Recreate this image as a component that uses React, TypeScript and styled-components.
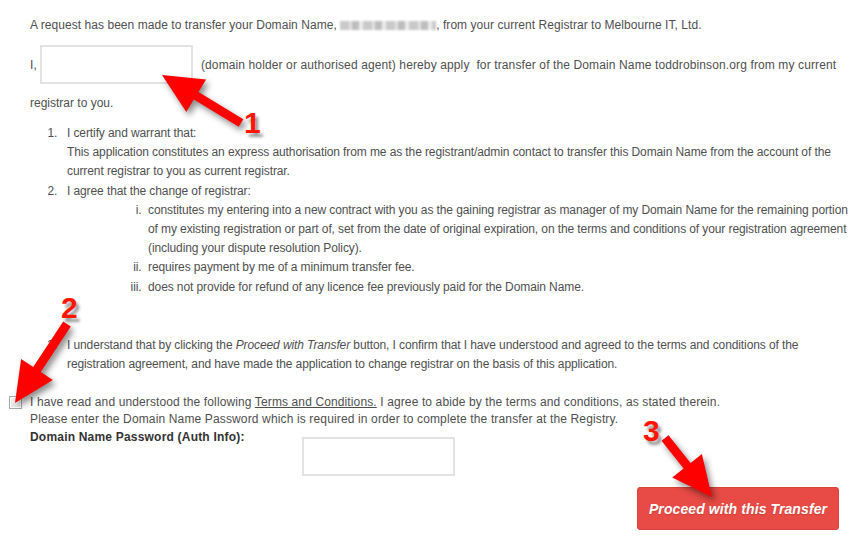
import React from "react";
import styled, { createGlobalStyle } from "styled-components";

const Global = createGlobalStyle`
  html, body { margin: 0; padding: 0; background: #fff; overflow: hidden; }
  body { font-family: "Liberation Sans", Arial, sans-serif; }
`;

const Page = styled.div`
  position: relative;
  width: 850px;
  height: 547px;
  box-sizing: border-box;
  padding: 16px 0 0 30px;
  color: #4f4f4f;
  font-size: 12px;
  overflow: hidden;
`;

const Para = styled.p<{ $ls?: number; $mt?: number; $lh?: number }>`
  margin: ${(p) => p.$mt ?? 0}px 0 0;
  line-height: ${(p) => p.$lh ?? 18}px;
  letter-spacing: ${(p) => p.$ls ?? 0}px;
  white-space: nowrap;
`;

const Blurred = styled.span`
  display: inline-block;
  width: 96px;
  height: 9px;
  vertical-align: -1px;
  background: repeating-linear-gradient(
    90deg,
    #c9c9c9 0 9px,
    #e2e2e2 9px 12px,
    #bdbdbd 12px 19px,
    #ececec 19px 23px
  );
  filter: blur(1px);
`;

const ApplyRow = styled.div`
  display: flex;
  align-items: center;
  margin-top: 11px;
  letter-spacing: 0.12px;
  white-space: nowrap;
`;

const TextBox = styled.input`
  box-sizing: border-box;
  width: 153px;
  height: 39px;
  border: 2px solid #e3e3e3;
  background: #fff;
  padding: 0 6px;
  outline: none;
  margin: 0 8px 0 3px;
`;

const Clauses = styled.ol`
  margin: 12px 0 0;
  padding-left: 37px;
  line-height: 19px;
  letter-spacing: -0.1px;
  white-space: nowrap;
  & > li::marker {
    content: counter(list-item) ".\\00a0\\00a0\\00a0";
  }
`;

const Clause = styled.li<{ $gap?: number }>`
  margin-top: ${(p) => p.$gap ?? 1}px;
`;

const SubClauses = styled.ol`
  list-style-type: lower-roman;
  margin: 0;
  padding-left: 81px;
  & > li::marker {
    content: counter(list-item, lower-roman) ".\\00a0\\00a0";
  }
`;

const AgreeRow = styled.label`
  display: flex;
  align-items: center;
  margin: 19px 0 0 -21px;
  line-height: 19px;
  letter-spacing: 0.12px;
  white-space: nowrap;
`;

const Check = styled.input.attrs({ type: "checkbox" })`
  appearance: none;
  box-sizing: border-box;
  width: 13px;
  height: 13px;
  margin: 0 8px 0 0;
  border: 1px solid #a9a9a9;
  background: linear-gradient(#f4f4f4, #e4e4e4);
  box-shadow: inset 0 0 0 1px #fff;
`;

const TermsLink = styled.a`
  color: inherit;
  text-decoration: underline;
`;

const PasswordRow = styled.div`
  display: flex;
  align-items: flex-start;
`;

const FieldLabel = styled.span`
  width: 272px;
  font-weight: bold;
  color: #333;
  line-height: 16px;
  letter-spacing: 0.2px;
  margin-top: 2px;
`;

const PasswordBox = styled(TextBox)`
  margin: 10px 0 0;
`;

const ActionRow = styled.div`
  display: flex;
  justify-content: flex-end;
  padding-right: 11px;
  margin-top: 11px;
`;

const ProceedButton = styled.button`
  width: 202px;
  height: 43px;
  box-sizing: border-box;
  border: 1px solid #d9423d;
  border-radius: 3px;
  background: #e84a45;
  color: #fff;
  font-family: "Liberation Sans", Arial, sans-serif;
  font-size: 14px;
  letter-spacing: 0.1px;
  font-weight: bold;
  font-style: italic;
  text-shadow: 0 1px 1px rgba(0, 0, 0, 0.15);
  cursor: pointer;
`;

const Overlay = styled.svg`
  position: absolute;
  left: 0;
  top: 0;
  pointer-events: none;
  filter: drop-shadow(3px 4px 3px rgba(0, 0, 0, 0.45));
`;

const Marker = styled.span<{ $x: number; $y: number }>`
  position: absolute;
  left: ${(p) => p.$x}px;
  top: ${(p) => p.$y}px;
  font-family: "Liberation Sans", Arial, sans-serif;
  font-size: 30px;
  line-height: 30px;
  font-weight: bold;
  color: #ff1500;
  text-shadow: 3px 4px 3px rgba(0, 0, 0, 0.4);
  pointer-events: none;
`;

type Pt = [number, number];

function arrowPoints(tip: Pt, tail: Pt, headLen: number, headHalf: number, shaftHalf: number) {
  const dx = tail[0] - tip[0];
  const dy = tail[1] - tip[1];
  const len = Math.hypot(dx, dy);
  const ux = dx / len;
  const uy = dy / len;
  const nx = -uy;
  const ny = ux;
  const bx = tip[0] + ux * headLen;
  const by = tip[1] + uy * headLen;
  const pts: Pt[] = [
    tip,
    [bx + nx * headHalf, by + ny * headHalf],
    [bx + nx * shaftHalf, by + ny * shaftHalf],
    [tail[0] + nx * shaftHalf, tail[1] + ny * shaftHalf],
    [tail[0] - nx * shaftHalf, tail[1] - ny * shaftHalf],
    [bx - nx * shaftHalf, by - ny * shaftHalf],
    [bx - nx * headHalf, by - ny * headHalf],
  ];
  return pts.map((p) => `${p[0].toFixed(1)},${p[1].toFixed(1)}`).join(" ");
}

const arrows: { tip: Pt; tail: Pt }[] = [
  { tip: [162, 75], tail: [241, 123] },
  { tip: [15, 403], tail: [67, 324] },
  { tip: [712, 497], tail: [665, 438] },
];

export default function App() {
  return (
    <>
      <Global />
      <Page>
        <Para $ls={0.05}>
          A request has been made to transfer your Domain Name, <Blurred />, from your current Registrar to
          Melbourne IT, Ltd.
        </Para>
        <ApplyRow>
          I,
          <TextBox aria-label="Name" />
          (domain holder or authorised agent) hereby apply&nbsp; for transfer of the Domain Name
          toddrobinson.org from my current
        </ApplyRow>
        <Para $mt={10}>registrar to you.</Para>
        <Clauses>
          <Clause $gap={0}>
            I certify and warrant that:
            <br />
            This application constitutes an express authorisation from me as the registrant/admin contact to
            transfer this Domain Name from the account of the
            <br />
            current registrar to you as current registrar.
          </Clause>
          <Clause>
            I agree that the change of registrar:
            <SubClauses>
              <Clause $gap={0}>
                constitutes my entering into a new contract with you as the gaining registrar as manager of my
                Domain Name for the remaining portion
                <br />
                of my existing registration or part of, set from the date of original expiration, on the terms
                and conditions of your registration agreement
                <br />
                (including your dispute resolution Policy).
              </Clause>
              <Clause $gap={0}>requires payment by me of a minimum transfer fee.</Clause>
              <Clause>does not provide for refund of any licence fee previously paid for the Domain Name.</Clause>
            </SubClauses>
          </Clause>
          <Clause $gap={39}>
            I understand that by clicking the <em>Proceed with Transfer</em> button, I confirm that I have
            understood and agreed to the terms and conditions of the
            <br />
            registration agreement, and have made the application to change registrar on the basis of this
            application.
          </Clause>
        </Clauses>
        <AgreeRow>
          <Check />
          <span>
            I have read and understood the following <TermsLink href="#">Terms and Conditions.</TermsLink> I
            agree to abide by the terms and conditions, as stated therein.
          </span>
        </AgreeRow>
        <Para $ls={0.14} $lh={16} $mt={-1}>
          Please enter the Domain Name Password which is required in order to complete the transfer at the
          Registry.
        </Para>
        <PasswordRow>
          <FieldLabel>Domain Name Password (Auth Info):</FieldLabel>
          <PasswordBox type="password" aria-label="Domain Name Password" />
        </PasswordRow>
        <ActionRow>
          <ProceedButton type="button">Proceed with this Transfer</ProceedButton>
        </ActionRow>

        <Overlay width="850" height="547" viewBox="0 0 850 547">
          {arrows.map((a, i) => (
            <polygon key={i} points={arrowPoints(a.tip, a.tail, 40, 19, 4.5)} fill="#ff0000" />
          ))}
        </Overlay>
        <Marker $x={244} $y={108}>1</Marker>
        <Marker $x={61} $y={293}>2</Marker>
        <Marker $x={643} $y={416}>3</Marker>
      </Page>
    </>
  );
}
